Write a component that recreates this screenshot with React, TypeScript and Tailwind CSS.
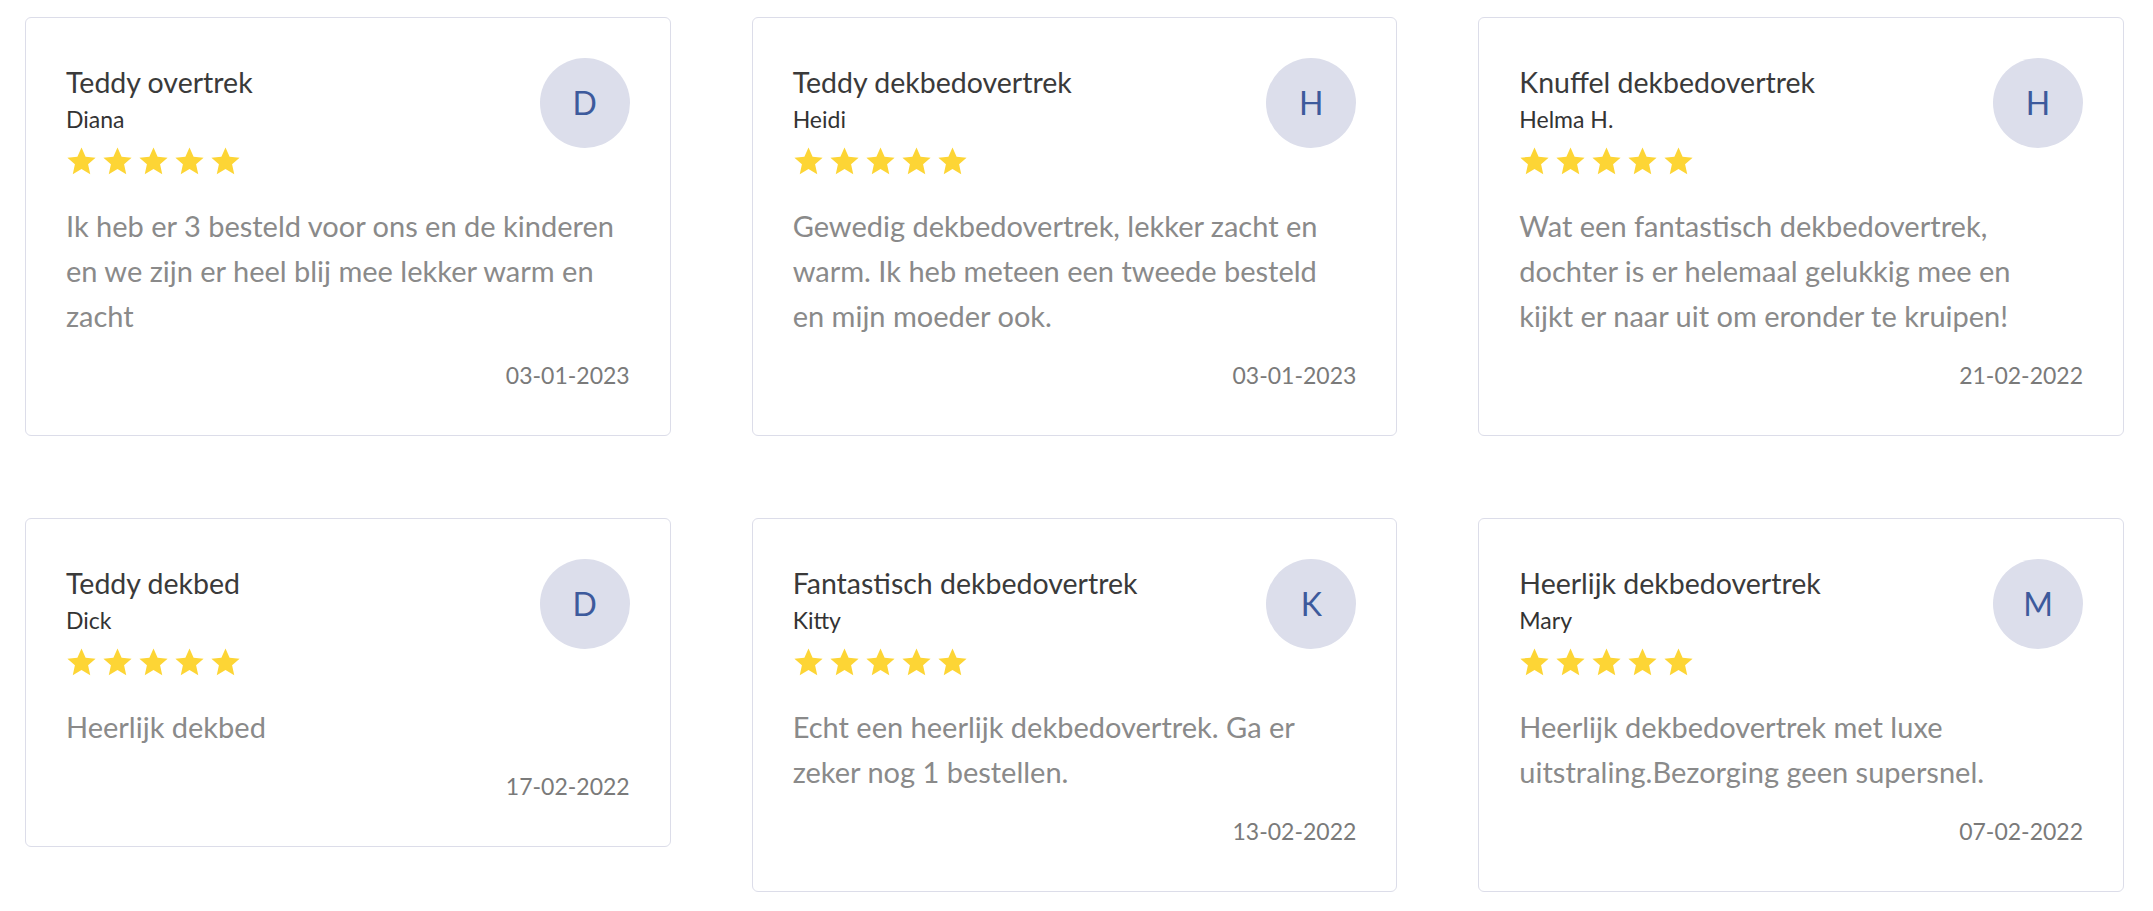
type Review = {
  title: string;
  author: string;
  initial: string;
  body: string;
  date: string;
};

const REVIEWS: Review[] = [
  {
    title: "Teddy overtrek",
    author: "Diana",
    initial: "D",
    body: "Ik heb er 3 besteld voor ons en de kinderen\nen we zijn er heel blij mee lekker warm en\nzacht",
    date: "03-01-2023",
  },
  {
    title: "Teddy dekbedovertrek",
    author: "Heidi",
    initial: "H",
    body: "Gewedig dekbedovertrek, lekker zacht en\nwarm. Ik heb meteen een tweede besteld\nen mijn moeder ook.",
    date: "03-01-2023",
  },
  {
    title: "Knuffel dekbedovertrek",
    author: "Helma H.",
    initial: "H",
    body: "Wat een fantastisch dekbedovertrek,\ndochter is er helemaal gelukkig mee en\nkijkt er naar uit om eronder te kruipen!",
    date: "21-02-2022",
  },
  {
    title: "Teddy dekbed",
    author: "Dick",
    initial: "D",
    body: "Heerlijk dekbed",
    date: "17-02-2022",
  },
  {
    title: "Fantastisch dekbedovertrek",
    author: "Kitty",
    initial: "K",
    body: "Echt een heerlijk dekbedovertrek. Ga er\nzeker nog 1 bestellen.",
    date: "13-02-2022",
  },
  {
    title: "Heerlijk dekbedovertrek",
    author: "Mary",
    initial: "M",
    body: "Heerlijk dekbedovertrek met luxe\nuitstraling.Bezorging geen supersnel.",
    date: "07-02-2022",
  },
];

function Star() {
  return (
    <svg viewBox="0 0 24 24" className="h-[31px] w-[31px]">
      <path
        fill="#fdd535"
        d="M12 1.2l3.18 7.08 7.72.78-5.8 5.15 1.67 7.59L12 17.86 5.23 21.8l1.67-7.59-5.8-5.15 7.72-.78z"
      />
    </svg>
  );
}

function ReviewCard({ review }: { review: Review }) {
  return (
    <div className="rounded-[6px] border border-[#dcdde9] bg-white px-10 pt-10 pb-[46px]">
      <div className="flex items-start justify-between">
        <div className="flex flex-col">
          <h3 className="text-[28.5px] leading-[48px] text-[#3a3a3a]">{review.title}</h3>
          <p className="text-[23px] leading-[27px] text-[#333333]">{review.author}</p>
          <div className="mt-[13px] flex gap-[5px]">
            {[0, 1, 2, 3, 4].map((i) => (
              <Star key={i} />
            ))}
          </div>
        </div>
        <div className="flex h-[90px] w-[90px] shrink-0 items-center justify-center rounded-full bg-[#dcdeeb] text-[32px] text-[#3d5a9c]">
          {review.initial}
        </div>
      </div>
      <p className="mt-[26px] whitespace-pre text-[29px] leading-[45px] text-[#8a8a8a]">
        {review.body}
      </p>
      <p className="mt-[23px] text-right text-[23px] leading-[28px] text-[#7a7a7a]">
        {review.date}
      </p>
    </div>
  );
}

export default function App() {
  return (
    <div className="min-h-screen bg-white font-['Lato',sans-serif]">
      <div className="grid grid-cols-3 items-start gap-x-[81px] gap-y-[82px] pt-[17px] pr-[29px] pl-[25px]">
        {REVIEWS.map((r) => (
          <ReviewCard key={r.title} review={r} />
        ))}
      </div>
    </div>
  );
}
